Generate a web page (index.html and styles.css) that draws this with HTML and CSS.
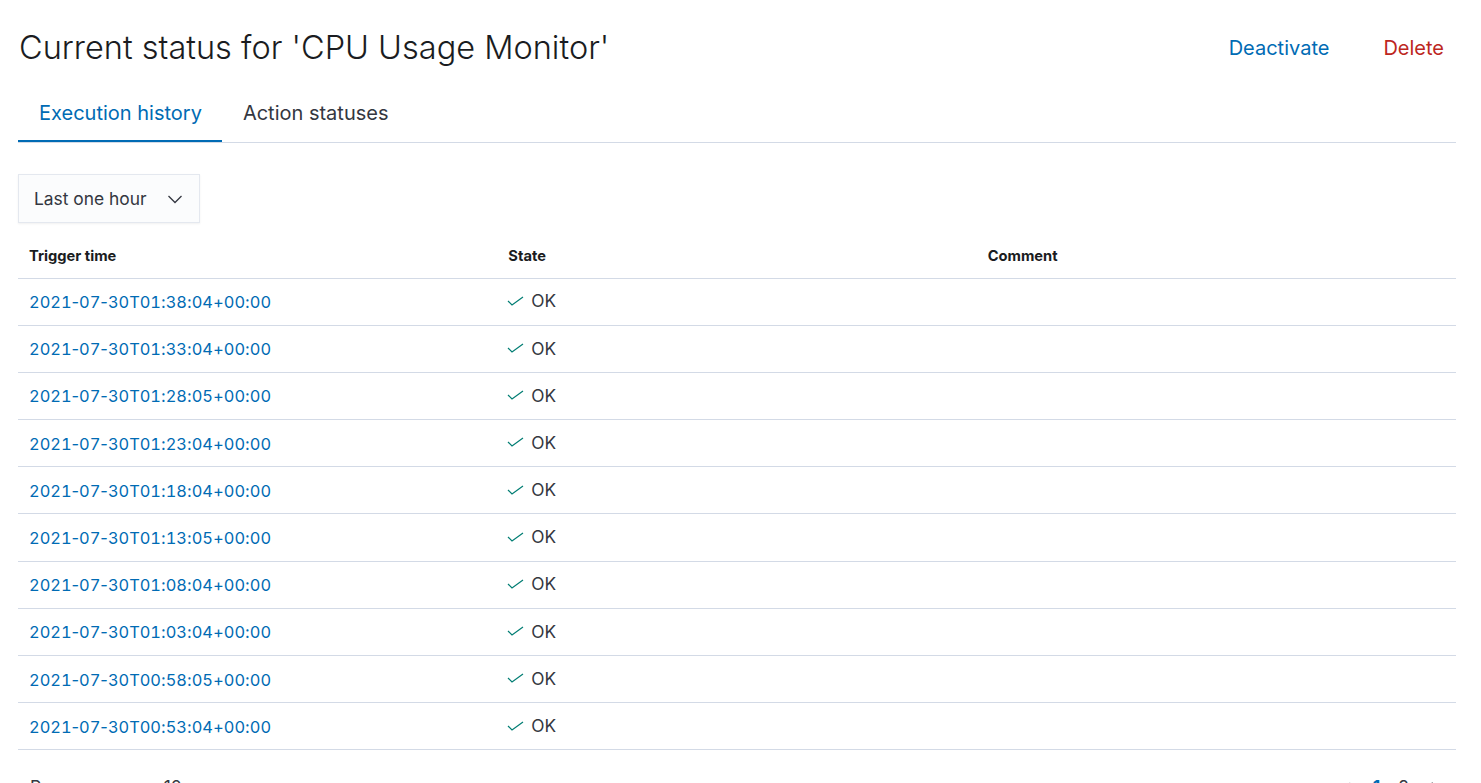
FILE: index.html
```html
<!DOCTYPE html>
<html>
<head>
<meta charset="utf-8">
<link rel="stylesheet" href="styles.css">
</head>
<body>
<div class="page">
  <header class="header">
    <h1 class="title">Current status for 'CPU Usage Monitor'</h1>
    <div class="actions">
      <button class="btn btn-primary">Deactivate</button>
      <button class="btn btn-danger">Delete</button>
    </div>
  </header>
  <nav class="tabs">
    <div class="tab tab-active">Execution history</div>
    <div class="tab">Action statuses</div>
  </nav>
  <div class="select">
    <span>Last one hour</span>
    <svg class="chev" width="16" height="16" viewBox="0 0 16 16"><path d="M1.5 5 8 11.5 14.5 5" fill="none" stroke="#343741" stroke-width="1.3"/></svg>
  </div>
  <table class="table">
    <thead>
      <tr><th>Trigger time</th><th>State</th><th>Comment</th></tr>
    </thead>
    <tbody id="rows"></tbody>
  </table>
  <div class="footer">
    <div class="rpp">Rows per page: 10 <svg width="14" height="14" viewBox="0 0 16 16"><path d="M3 6l5 5 5-5" fill="none" stroke="#343741" stroke-width="1.3"/></svg></div>
    <div class="pager">
      <svg width="14" height="14" viewBox="0 0 16 16"><path d="M10.5 3 5.5 8l5 5" fill="none" stroke="#c2c3c6" stroke-width="1.3"/></svg>
      <span class="pg pg-active">1</span>
      <span class="pg">2</span>
      <svg width="14" height="14" viewBox="0 0 16 16"><path d="M5.5 3l5 5-5 5" fill="none" stroke="#343741" stroke-width="1.3"/></svg>
    </div>
  </div>
</div>
<script>
var times=["2021-07-30T01:38:04+00:00","2021-07-30T01:33:04+00:00","2021-07-30T01:28:05+00:00","2021-07-30T01:23:04+00:00","2021-07-30T01:18:04+00:00","2021-07-30T01:13:05+00:00","2021-07-30T01:08:04+00:00","2021-07-30T01:03:04+00:00","2021-07-30T00:58:05+00:00","2021-07-30T00:53:04+00:00"];
var tb=document.getElementById('rows');
times.forEach(function(t){
  var html=t.replace(/[-:+]/g,function(c){return '<span class="pn">'+c+'</span>';});
  var tr=document.createElement('tr');
  tr.innerHTML='<td><a class="link">'+html+'</a></td><td><span class="state"><svg width="17" height="16" viewBox="0 0 17 16"><path d="M1 8 5 12 16 4" fill="none" stroke="#017d73" stroke-width="1.2"/></svg>OK</span></td><td></td>';
  tb.appendChild(tr);
});
</script>
</body>
</html>
```
FILE: styles.css
```css
* { box-sizing: border-box; }
html, body { margin: 0; padding: 0; background: #fff; }
body { font-family: Inter, "Noto Sans", sans-serif; color: #343741; }
.page { padding: 0 25px 0 18px; }
.header { display: flex; align-items: center; justify-content: space-between; height: 96px; }
.title { margin: 0; font-size: 32.5px; font-weight: 300; color: #1a1c21; line-height: 40px; padding-left: 1px; }
.actions { display: flex; gap: 30px; }
.btn { background: none; border: 0; font-family: inherit; font-size: 20px; padding: 8px 12px; cursor: pointer; }
.btn-primary { color: #006bb4; }
.btn-danger { color: #bd271e; }
.tabs { display: flex; border-bottom: 1px solid #d3dae6; height: 47px; }
.tab { font-size: 20px; padding: 0 20px 0 21px; line-height: 34px; color: #343741; height: 46px; }
.tab-active { color: #006bb4; box-shadow: inset 0 -2px 0 #006bb4; }
.select { margin-top: 31px; width: 182px; height: 49px; background: #fbfcfd; border: 1px solid #e4e8ef; box-shadow: 0 1px 2px rgba(0,0,0,0.06); display: flex; align-items: center; justify-content: space-between; padding: 0 16px 1px 15px; font-size: 17.4px; color: #343741; }
.chev { margin-top: 1px; }
.table { width: 100%; border-collapse: collapse; table-layout: fixed; margin-top: 12px; }
.table th { text-align: left; font-size: 14.7px; font-weight: 700; color: #1a1c21; padding: 0 11px; height: 43px; border-bottom: 1px solid #d3dae6; vertical-align: middle; }
.table td { font-size: 17.3px; padding: 0 11px; height: 47.2px; border-bottom: 1px solid #d3dae6; vertical-align: middle; }
.link { color: #006bb4; font-size: 16.4px; font-variant-numeric: tabular-nums; }
.pn { font-variant-numeric: normal; }
.state { display: inline-flex; align-items: center; gap: 7px; color: #343741; margin-left: -1px; }
.footer { display: flex; justify-content: space-between; align-items: center; padding: 26px 15px 0 12px; font-size: 17.5px; }
.rpp { display: flex; align-items: center; gap: 8px; }
.pager { display: flex; align-items: center; gap: 18px; }
.pg { font-size: 17.5px; }
.pg-active { color: #006bb4; font-weight: 700; }
```
